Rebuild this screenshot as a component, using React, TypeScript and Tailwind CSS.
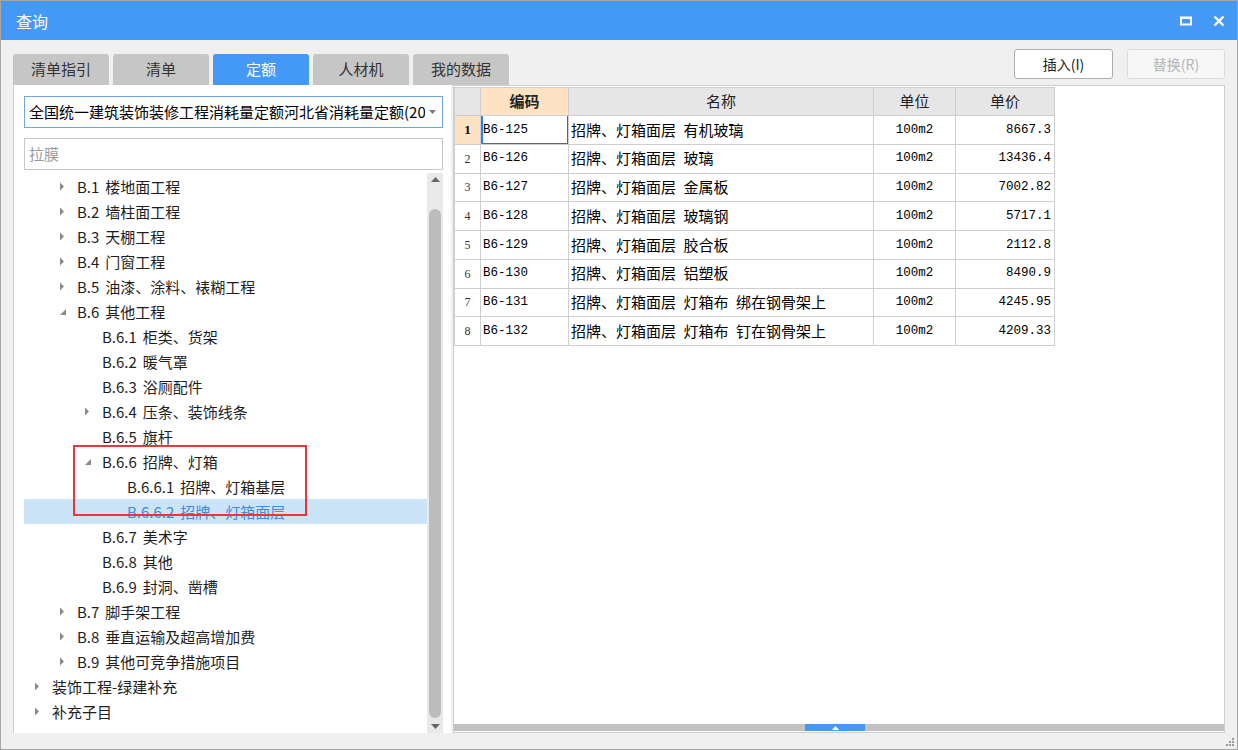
import React from 'react'

type Node = { label: string; level: number; arrow?: 'right' | 'down'; selected?: boolean }

const tree: Node[] = [
  { label: 'B.1 楼地面工程', level: 2, arrow: 'right' },
  { label: 'B.2 墙柱面工程', level: 2, arrow: 'right' },
  { label: 'B.3 天棚工程', level: 2, arrow: 'right' },
  { label: 'B.4 门窗工程', level: 2, arrow: 'right' },
  { label: 'B.5 油漆、涂料、裱糊工程', level: 2, arrow: 'right' },
  { label: 'B.6 其他工程', level: 2, arrow: 'down' },
  { label: 'B.6.1 柜类、货架', level: 3 },
  { label: 'B.6.2 暖气罩', level: 3 },
  { label: 'B.6.3 浴厕配件', level: 3 },
  { label: 'B.6.4 压条、装饰线条', level: 3, arrow: 'right' },
  { label: 'B.6.5 旗杆', level: 3 },
  { label: 'B.6.6 招牌、灯箱', level: 3, arrow: 'down' },
  { label: 'B.6.6.1 招牌、灯箱基层', level: 4 },
  { label: 'B.6.6.2 招牌、灯箱面层', level: 4, selected: true },
  { label: 'B.6.7 美术字', level: 3 },
  { label: 'B.6.8 其他', level: 3 },
  { label: 'B.6.9 封洞、凿槽', level: 3 },
  { label: 'B.7 脚手架工程', level: 2, arrow: 'right' },
  { label: 'B.8 垂直运输及超高增加费', level: 2, arrow: 'right' },
  { label: 'B.9 其他可竞争措施项目', level: 2, arrow: 'right' },
  { label: '装饰工程-绿建补充', level: 1, arrow: 'right' },
  { label: '补充子目', level: 1, arrow: 'right' },
]

const rows = [
  ['B6-125', '招牌、灯箱面层\u2002有机玻璃', '100m2', '8667.3'],
  ['B6-126', '招牌、灯箱面层\u2002玻璃', '100m2', '13436.4'],
  ['B6-127', '招牌、灯箱面层\u2002金属板', '100m2', '7002.82'],
  ['B6-128', '招牌、灯箱面层\u2002玻璃钢', '100m2', '5717.1'],
  ['B6-129', '招牌、灯箱面层\u2002胶合板', '100m2', '2112.8'],
  ['B6-130', '招牌、灯箱面层\u2002铝塑板', '100m2', '8490.9'],
  ['B6-131', '招牌、灯箱面层\u2002灯箱布\u2002绑在钢骨架上', '100m2', '4245.95'],
  ['B6-132', '招牌、灯箱面层\u2002灯箱布\u2002钉在钢骨架上', '100m2', '4209.33'],
]

const tabs = ['清单指引', '清单', '定额', '人材机', '我的数据']

const Arrow = ({ dir }: { dir: 'right' | 'down' }) =>
  dir === 'right' ? (
    <svg width="6" height="9" viewBox="0 0 6 9"><path d="M1 0.5 L5 4.5 L1 8.5 Z" fill="#8a8a8a" /></svg>
  ) : (
    <svg width="8" height="8" viewBox="0 0 8 8"><path d="M7 1 L7 7 L1 7 Z" fill="#8a8a8a" /></svg>
  )

const Label = ({ text }: { text: string }) => {
  const i = text.indexOf(' ')
  if (i < 0 || !text.startsWith('B')) return <span className="text-[15px] leading-none whitespace-nowrap">{text}</span>
  return (
    <span className="text-[15px] leading-none whitespace-nowrap">
      {text.slice(0, i)}
      <span className="ml-[6px]">{text.slice(i + 1)}</span>
    </span>
  )
}

export default function App() {
  const font = { fontFamily: '"Noto Sans CJK SC", "Noto Sans", sans-serif' }
  const mono = { fontFamily: '"Liberation Mono", "Noto Sans CJK SC", monospace' }
  return (
    <div className="w-[1238px] h-[750px] bg-[#f0f0f0] border border-[#a6a6a6] flex flex-col overflow-hidden" style={font}>
      {/* title bar */}
      <div className="h-[39px] bg-[#4499f6] flex items-center justify-between pl-[15px] pr-[12px] text-white">
        <span className="text-[16px] leading-none">查询</span>
        <div className="flex items-center gap-[21px]">
          <svg width="12" height="10" viewBox="0 0 12 10"><rect x="1" y="1.5" width="10" height="7" fill="none" stroke="white" strokeWidth="2" /><rect x="1" y="1" width="10" height="2" fill="white" /></svg>
          <svg width="12" height="12" viewBox="0 0 12 12"><path d="M1.5 1.5 L10.5 10.5 M10.5 1.5 L1.5 10.5" stroke="white" strokeWidth="2.4" /></svg>
        </div>
      </div>

      {/* tabs + buttons */}
      <div className="h-[45px] flex justify-between px-[12px]">
        <div className="flex gap-[4px] items-end">
          {tabs.map((t) => (
            <div
              key={t}
              className={
                t === '定额'
                  ? 'w-[96px] h-[31px] rounded-t-[3px] bg-[#4499f6] text-white text-[15px] flex items-center justify-center'
                  : 'w-[96px] h-[31px] rounded-t-[3px] bg-[#c6c6c6] text-[#333] text-[15px] flex items-center justify-center'
              }
            >
              {t}
            </div>
          ))}
        </div>
        <div className="flex gap-[14px] pt-[9px]">
          <button className="w-[99px] h-[30px] bg-white border border-[#adadad] rounded-[3px] text-[14px] text-[#222]">插入(I)</button>
          <button className="w-[98px] h-[30px] bg-[#f7f7f7] border border-[#dcdcdc] rounded-[3px] text-[14px] text-[#b5b5b5]">替换(R)</button>
        </div>
      </div>

      {/* main */}
      <div className="h-[648px] flex gap-[2px] px-[12px]">
        {/* left panel */}
        <div className="w-[438px] bg-white border-l border-[#d0d0d0] flex flex-col pl-[10px] pr-[7px] pt-[11px]">
          <div className="h-[32px] w-[419px] border border-[#6aa6e8] flex items-center pl-[4px] pr-[6px] gap-[4px]">
            <span className="flex-1 text-[15px] text-black whitespace-nowrap overflow-hidden">全国统一建筑装饰装修工程消耗量定额河北省消耗量定额(2022)</span>
            <svg width="7" height="4" viewBox="0 0 7 4"><path d="M0 0 L7 0 L3.5 4 Z" fill="#777" /></svg>
          </div>
          <div className="h-[32px] w-[419px] mt-[10px] border border-[#c8c8c8] flex items-center pl-[4px] text-[15px] text-[#9a9a9a]">拉膜</div>
          <div className="flex-1 flex mt-[3px] min-h-0">
            <div className="relative w-[403px] pt-[1px]">
              {tree.map((n) => (
                <div
                  key={n.label}
                  className={n.selected ? 'h-[25px] flex items-center bg-[#cce4f7] text-[#3c8be4]' : 'h-[25px] flex items-center text-[#1e1e1e]'}
                  style={{ paddingLeft: 10 + (n.level - 1) * 25 }}
                >
                  <span className="w-[18px] flex items-center">{n.arrow ? <Arrow dir={n.arrow} /> : null}</span>
                  <Label text={n.label} />
                </div>
              ))}
              <div className="absolute left-[49px] top-[272px] w-[234px] h-[71px] border-2 border-[#e8373a]" />
            </div>
            <div className="w-[16px] bg-[#e9e9e9] flex flex-col items-center py-[4px]">
              <svg width="9" height="5" viewBox="0 0 9 5"><path d="M0 5 L4.5 0 L9 5 Z" fill="#666" /></svg>
              <div className="flex-1 w-[12px] rounded-full bg-[#bcbcbc] mt-[27px] mb-[6px]" />
              <svg width="9" height="5" viewBox="0 0 9 5"><path d="M0 0 L4.5 5 L9 0 Z" fill="#666" /></svg>
            </div>
          </div>
        </div>

        {/* right panel */}
        <div className="flex-1 bg-white border border-[#cfcfcf] flex flex-col">
          <div className="flex-1 pt-[1px]">
            <table className="border-collapse table-fixed text-[15px]" style={{ width: 601 }}>
              <colgroup>
                <col style={{ width: 26 }} />
                <col style={{ width: 88 }} />
                <col style={{ width: 305 }} />
                <col style={{ width: 82 }} />
                <col style={{ width: 99 }} />
              </colgroup>
              <thead>
                <tr className="h-[28px]">
                  <th className="bg-[#e6e6e6] border border-[#cfcfcf]" />
                  <th className="bg-[#fde3c3] border border-[#cfcfcf] font-bold text-[#222]">编码</th>
                  <th className="bg-[#e6e6e6] border border-[#cfcfcf] font-normal text-[#222]">名称</th>
                  <th className="bg-[#e6e6e6] border border-[#cfcfcf] font-normal text-[#222]">单位</th>
                  <th className="bg-[#e6e6e6] border border-[#cfcfcf] font-normal text-[#222]">单价</th>
                </tr>
              </thead>
              <tbody>
                {rows.map((r, i) => (
                  <tr key={r[0]} className="h-[28.75px]">
                    <td
                      className={i === 0 ? 'bg-[#fde3c3] border border-[#cfcfcf] text-center text-[13px] font-bold text-black' : 'bg-white border border-[#cfcfcf] text-center text-[12px] text-[#333]'}
                      style={{ fontFamily: '"Liberation Serif", serif' }}
                    >
                      {i + 1}
                    </td>
                    <td
                      className={i === 0 ? 'border border-[#cfcfcf] pl-[2px] text-[12.5px] text-black shadow-[inset_2px_0_0_#2f7fe6,inset_-1px_-1px_0_#666]' : 'border border-[#cfcfcf] pl-[2px] text-[12.5px] text-black'}
                      style={mono}
                    >
                      {r[0]}
                    </td>
                    <td className="border border-[#cfcfcf] pl-[2px] text-black whitespace-nowrap">{r[1]}</td>
                    <td className="border border-[#cfcfcf] text-center text-[12.5px] text-black" style={mono}>{r[2]}</td>
                    <td className="border border-[#cfcfcf] text-right pr-[3px] text-[12.5px] text-black" style={mono}>{r[3]}</td>
                  </tr>
                ))}
              </tbody>
            </table>
          </div>
          <div className="h-[7px] bg-[#c2c2c2] flex mb-[1px]">
            <div className="ml-[351px] w-[60px] h-full bg-[#4499f6] flex items-center justify-center">
              <svg width="7" height="4" viewBox="0 0 7 4"><path d="M0 4 L3.5 0 L7 4 Z" fill="white" /></svg>
            </div>
          </div>
        </div>
      </div>

      {/* bottom with grip */}
      <div className="flex-1 flex justify-end items-end pr-[2px] pb-[2px]">
        <svg width="10" height="10" viewBox="0 0 10 10" fill="#9a9a9a">
          <rect x="7" y="1" width="2" height="2" />
          <rect x="4" y="4" width="2" height="2" />
          <rect x="7" y="4" width="2" height="2" />
          <rect x="1" y="7" width="2" height="2" />
          <rect x="4" y="7" width="2" height="2" />
          <rect x="7" y="7" width="2" height="2" />
        </svg>
      </div>
    </div>
  )
}
